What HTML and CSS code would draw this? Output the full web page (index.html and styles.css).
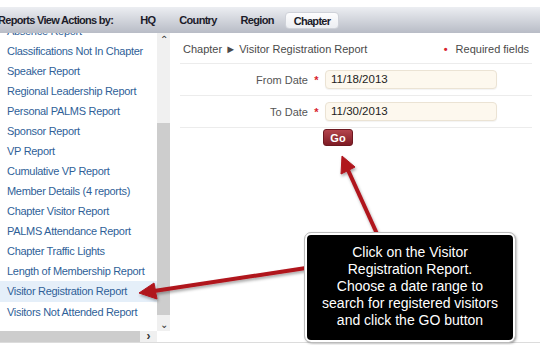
FILE: index.html
```html
<!DOCTYPE html>
<html lang="en">
<head>
    <meta charset="UTF-8">
    <title>Visitor Registration Report</title>
    <link rel="stylesheet" href="styles.css">
</head>
<body>
    <div class="topgap"></div>
    <nav class="toolbar">
        <span class="toolbar-title">Reports View Actions by:</span>
        <span class="tab">HQ</span>
        <span class="tab">Country</span>
        <span class="tab">Region</span>
        <span class="tab active">Chapter</span>
    </nav>
    <div class="frame">
        <aside class="sidebar">
            <div class="side-main">
                <div class="side-list">
                    <ul class="reports">
                        <li>Absence Report</li>
                        <li>Classifications Not In Chapter</li>
                        <li>Speaker Report</li>
                        <li>Regional Leadership Report</li>
                        <li>Personal PALMS Report</li>
                        <li>Sponsor Report</li>
                        <li>VP Report</li>
                        <li>Cumulative VP Report</li>
                        <li>Member Details (4 reports)</li>
                        <li>Chapter Visitor Report</li>
                        <li>PALMS Attendance Report</li>
                        <li>Chapter Traffic Lights</li>
                        <li>Length of Membership Report</li>
                        <li class="selected">Visitor Registration Report</li>
                        <li>Visitors Not Attended Report</li>
                    </ul>
                </div>
                <div class="vscroll">
                    <span class="arrow">&#8963;</span>
                    <div class="vtrack"><div class="vthumb"></div></div>
                    <span class="arrow">&#8964;</span>
                </div>
            </div>
            <div class="hscroll">
                <div class="htrack"><div class="hthumb"></div><span class="harrow">&#8250;</span></div>
                <div class="corner"></div>
            </div>
        </aside>
        <main class="content">
            <div class="content-head">
                <span class="crumb">Chapter &#9658; Visitor Registration Report</span>
                <span class="required"><b>&bull;</b> Required fields</span>
            </div>
            <div class="form-row">
                <label>From Date</label><span class="star">*</span>
                <div class="field">11/18/2013</div>
            </div>
            <div class="form-row">
                <label>To Date</label><span class="star">*</span>
                <div class="field">11/30/2013</div>
            </div>
            <div class="form-actions">
                <button class="go">Go</button>
            </div>
        </main>
    </div>

    <svg class="arrows" width="540" height="345" viewBox="0 0 540 345">
        <defs>
            <filter id="shadow" x="-20%" y="-20%" width="140%" height="140%">
                <feDropShadow dx="1" dy="2" stdDeviation="1.5" flood-color="#000" flood-opacity="0.35"/>
            </filter>
        </defs>
        <g filter="url(#shadow)" fill="#b0141d" stroke="#b0141d">
            <line x1="378" y1="236" x2="348" y2="170" stroke-width="4"/>
            <polygon points="342,156 355,167 341,174" stroke-width="1"/>
            <line x1="306" y1="268" x2="154" y2="291" stroke-width="4"/>
            <polygon points="139,293 154,283 157,299" stroke-width="1"/>
        </g>
    </svg>

    <div class="callout">
        Click on the Visitor<br>
        Registration Report.<br>
        Choose a date range to<br>
        search for registered visitors<br>
        and click the GO button
    </div>
</body>
</html>
```

FILE: styles.css
```css
body {
    font-family: "Liberation Sans", Arial, Helvetica, sans-serif;
    margin: 0;
    padding: 0;
    width: 540px;
    height: 345px;
    overflow: hidden;
    background-color: #fff;
    position: relative;
}
.topgap {
    height: 7px;
}
.toolbar {
    height: 26px;
    display: flex;
    align-items: center;
    background-image: linear-gradient(to bottom, #eceef2, #b8bcc6);
    font-size: 11px;
    font-weight: bold;
    letter-spacing: -0.7px;
    color: #1c1c2a;
    margin-left: -2px;
}
.toolbar-title {
    margin-right: 27px;
}
.tab {
    margin-right: 24px;
}
.tab.active {
    margin-left: -13px;
    padding: 2px 8px 1px;
    background-image: linear-gradient(to bottom, #fdfdfe, #eceef2);
    border: 1px solid #cfd2d9;
    border-radius: 4px;
}
.frame {
    display: flex;
    height: 309px;
    border-bottom: 1px solid #dcdcdc;
}
.sidebar {
    width: 170px;
    display: flex;
    flex-direction: column;
}
.side-main {
    flex: 1;
    display: flex;
    overflow: hidden;
}
.side-list {
    width: 157px;
    overflow: hidden;
}
.reports {
    list-style: none;
    margin: -12px 0 0 0;
    padding: 0;
    font-size: 11px;
    letter-spacing: -0.3px;
    color: #2f5f98;
}
.reports li {
    height: 20px;
    line-height: 20px;
    padding-left: 7px;
    white-space: nowrap;
}
.reports li.selected {
    background-color: #e5eff9;
    height: 21px;
    line-height: 21px;
}
.vscroll {
    width: 13px;
    background-color: #f0f0f0;
    display: flex;
    flex-direction: column;
    align-items: center;
}
.arrow {
    height: 13px;
    font-size: 10px;
    line-height: 13px;
    color: #333;
}
.vtrack {
    flex: 1;
    width: 100%;
    padding-top: 77px;
    box-sizing: border-box;
}
.vthumb {
    height: 192px;
    background-color: #cdcdcd;
}
.hscroll {
    height: 11px;
    display: flex;
}
.htrack {
    width: 157px;
    background-color: #f0f0f0;
    display: flex;
    align-items: center;
}
.hthumb {
    width: 140px;
    height: 100%;
    background-color: #cdcdcd;
}
.harrow {
    flex: 1;
    text-align: center;
    font-size: 12px;
    font-weight: bold;
    color: #333;
    line-height: 11px;
}
.corner {
    flex: 1;
}
.content {
    flex: 1;
    padding: 0 8px 0 10px;
}
.content-head {
    display: flex;
    justify-content: space-between;
    align-items: center;
    height: 29px;
    padding: 1px 3px 0 3px;
    border-bottom: 1px solid #ececec;
    font-size: 11px;
    color: #4a4a4a;
}
.required b {
    color: #d9232e;
    margin-right: 5px;
}
.form-row {
    display: flex;
    align-items: center;
    height: 31px;
    border-bottom: 1px solid #ececec;
    font-size: 11px;
    color: #555;
}
.form-row label {
    width: 128px;
    text-align: right;
}
.star {
    width: 17px;
    text-align: center;
    color: #d9232e;
    font-weight: bold;
}
.field {
    width: 160px;
    height: 17px;
    line-height: 17px;
    padding: 0 5px;
    background-color: #fdf8ee;
    border: 1px solid #ebe3d4;
    border-radius: 4px;
    box-shadow: 0 1px 1px rgba(0, 0, 0, 0.05);
    font-size: 11.5px;
    color: #222;
}
.form-actions {
    padding: 1px 0 0 143px;
}
.go {
    display: block;
    width: 30px;
    height: 17px;
    padding: 0;
    border: 1px solid #6d1820;
    border-radius: 3px;
    background-image: linear-gradient(to bottom, #b4444d, #7e1b24);
    color: #fff;
    font-family: "Liberation Sans", Arial, sans-serif;
    font-size: 11px;
    font-weight: bold;
}
.arrows {
    position: absolute;
    left: 0;
    top: 0;
    pointer-events: none;
}
.callout {
    position: absolute;
    left: 305px;
    top: 233px;
    width: 210px;
    height: 109px;
    padding-top: 9px;
    box-sizing: border-box;
    background-color: #000;
    border: 2px solid #fff;
    outline: 1px solid #bbb;
    border-radius: 6px;
    box-shadow: 1px 1px 3px rgba(0, 0, 0, 0.5);
    color: #fff;
    font-size: 14px;
    line-height: 17px;
    text-align: center;
}
```
